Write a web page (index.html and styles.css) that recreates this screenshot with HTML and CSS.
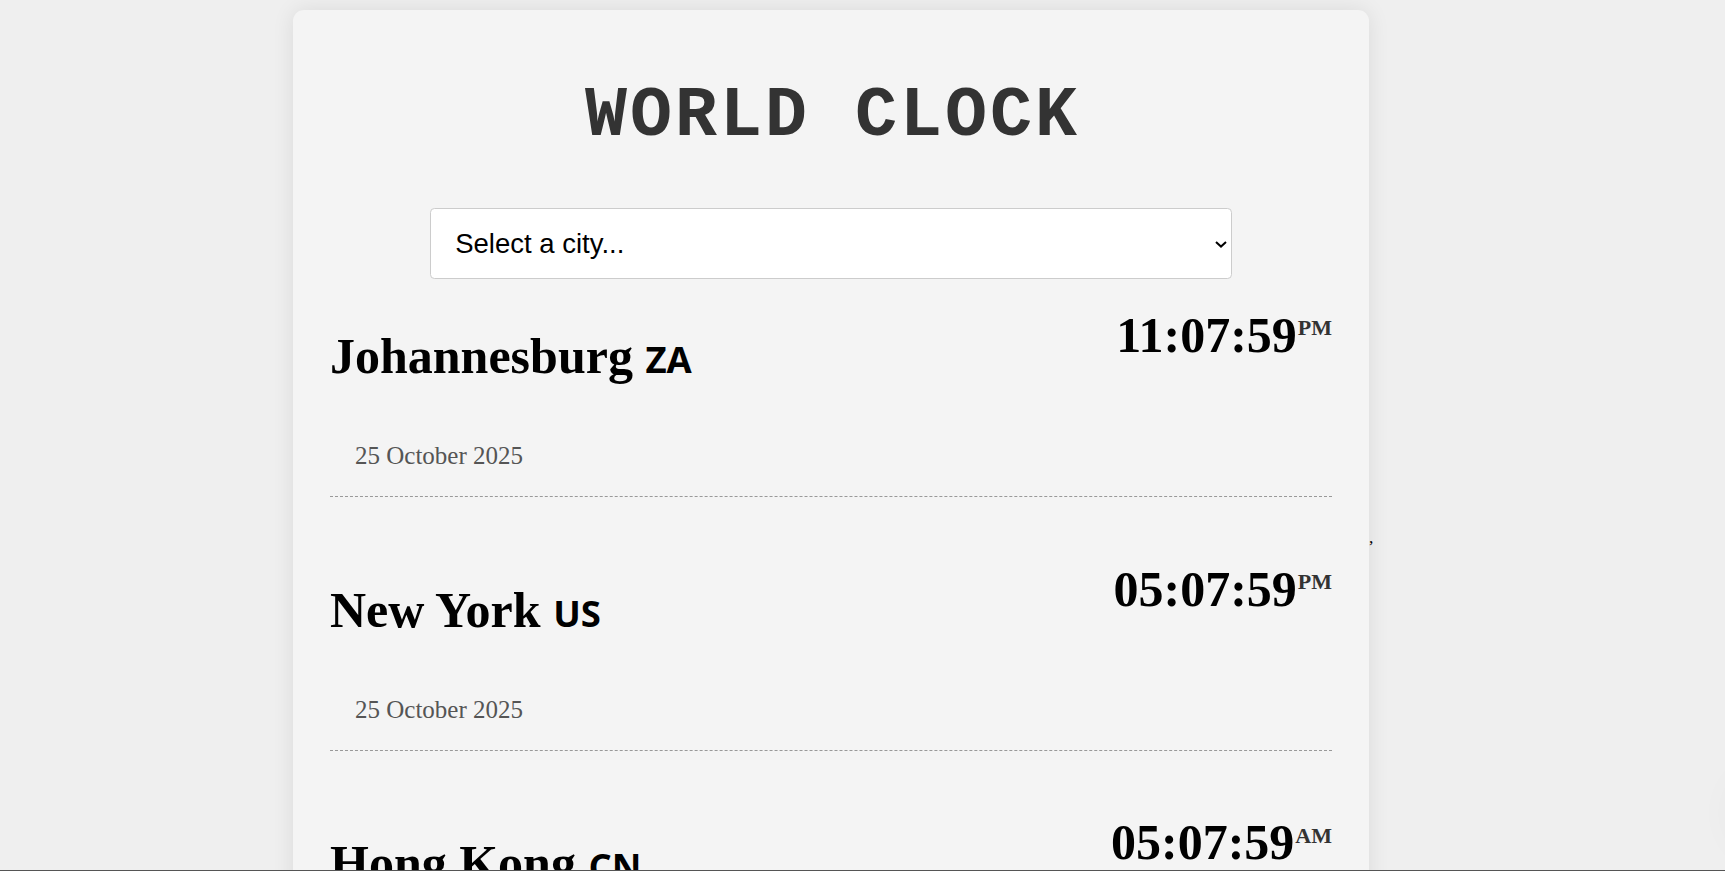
FILE: index.html
```html
<!DOCTYPE html>
<html lang="en">
<head>
<meta charset="utf-8">
<title>World Clock</title>
<link rel="stylesheet" href="styles.css">
</head>
<body>
  <main class="card">
    <h1 class="title">WORLD CLOCK</h1>
    <div class="picker">
      <select class="city-select">
        <option>Select a city...</option>
        <option>Johannesburg</option>
        <option>New York</option>
        <option>Hong Kong</option>
      </select>
      <svg class="chevron" width="12" height="7" viewBox="0 0 12 7" aria-hidden="true"><path d="M1 1 L6 5.6 L11 1" fill="none" stroke="#000" stroke-width="2"/></svg>
    </div>
    <div class="cities">
      <div class="row">
        <div class="place">
          <h2 class="city">Johannesburg <span class="flag">ZA</span></h2>
          <div class="date">25 October 2025</div>
        </div>
        <div class="time">11:07:59<sup class="ampm">PM</sup></div>
      </div>
      <div class="row">
        <div class="place">
          <h2 class="city">New York <span class="flag">US</span></h2>
          <div class="date">25 October 2025</div>
        </div>
        <div class="time">05:07:59<sup class="ampm">PM</sup></div>
      </div>
      <div class="row">
        <div class="place">
          <h2 class="city">Hong Kong <span class="flag">CN</span></h2>
          <div class="date">26 October 2025</div>
        </div>
        <div class="time">05:07:59<sup class="ampm">AM</sup></div>
      </div>
    </div>
  </main>
  <span class="stray">,</span>
  <div class="fab-shadow"></div>
  <div class="bottom-edge"></div>
</body>
</html>
```
FILE: styles.css
```css
html {
  scrollbar-width: none;
  overflow: hidden;
}
html::-webkit-scrollbar { display: none; }

body {
  margin: 0;
  padding: 10px 58.6px 0 0;
  background: #efefef;
  display: flex;
  justify-content: center;
  align-items: center;
  font-family: "Liberation Serif", "Times New Roman", serif;
}

.card {
  box-sizing: border-box;
  width: 1076px;
  flex: none;
  padding: 20px 37px 60px;
  background: #f4f4f4;
  border-radius: 11px;
  box-shadow: 0 0 22px rgba(0, 0, 0, 0.09);
}

.title {
  margin: 45.4px 0 48.6px;
  text-align: center;
  font-family: "Liberation Mono", "Courier New", monospace;
  font-weight: 700;
  font-size: 70px;
  line-height: 84px;
  letter-spacing: 3px;
  padding-left: 3px;
  color: #333;
}

.picker {
  position: relative;
  width: 80%;
  margin: 0 auto;
}

.city-select {
  -webkit-appearance: none;
  appearance: none;
  display: block;
  box-sizing: border-box;
  width: 100%;
  height: 71px;
  padding: 0 24px;
  font-family: "Liberation Sans", Arial, sans-serif;
  font-size: 27.5px;
  color: #000;
  background: #fff;
  border: 1px solid #ccc;
  border-radius: 4.4px;
  outline: none;
}

.chevron {
  position: absolute;
  right: 5px;
  top: 33px;
  pointer-events: none;
}

.row {
  display: flex;
  justify-content: space-between;
  align-items: flex-start;
  padding: 61.8px 0 25.6px;
  border-bottom: 1px dashed #999;
}
.row:first-child { padding-top: 25.8px; }

.city {
  margin: 21px 0 0;
  font-weight: 700;
  font-size: 50px;
  line-height: 60px;
  color: #000;
}

.flag {
  font-family: "Open Sans", "DejaVu Sans", sans-serif;
  font-weight: 700;
  font-size: 36.5px;
  line-height: 1;
}

.date {
  margin-top: 55.1px;
  padding-left: 25px;
  font-size: 25px;
  line-height: 29.28px;
  color: #555;
}

.time {
  font-weight: 700;
  font-size: 50px;
  line-height: 60px;
  color: #000;
  white-space: nowrap;
}

.ampm {
  font-size: 22px;
  font-weight: 700;
  color: #333;
  vertical-align: 16.7px;
  line-height: 0;
  margin-left: 1px;
}

.stray {
  flex: none;
  font-size: 17.6px;
  color: #000;
}

.fab-shadow {
  position: fixed;
  right: -75px;
  bottom: 28px;
  width: 60px;
  height: 60px;
  border-radius: 50%;
  box-shadow: 0 0 45px 5px rgba(0, 0, 0, 0.05);
}

.bottom-edge {
  position: fixed;
  left: 0;
  right: 0;
  bottom: 0;
  height: 1px;
  background: #555;
}
```
